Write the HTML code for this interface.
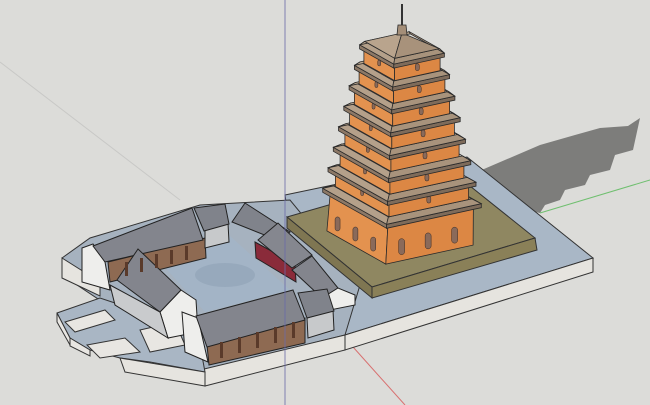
<!DOCTYPE html>
<html><head><meta charset="utf-8"><style>
html,body{margin:0;padding:0;background:#dcdcd8;width:650px;height:405px;overflow:hidden}
svg{display:block}
</style></head><body>
<svg id="s" width="650" height="405" viewBox="0 0 650 405" xmlns="http://www.w3.org/2000/svg">
<rect width="650" height="405" fill="#dcdcd9"/>
<line x1="0" y1="62" x2="180" y2="200" stroke="#c8c8c6" stroke-width="1"/>
<polygon points="470,175,540,145,575,135,600,128,628,126,640,118,633,150,615,155,610,170,590,175,585,185,565,190,560,200,545,205,540,213,505,205" fill="#7d7d7b"/>
<line x1="540" y1="213" x2="650" y2="180" stroke="#6fbf6f" stroke-width="1"/>
<line x1="345" y1="338" x2="405" y2="405" stroke="#d87070" stroke-width="1"/>
<polygon points="285,195,467,157,593,258,345,335,300,300" fill="#a9b7c6" stroke="#333" stroke-width="1"/>
<polygon points="345,335,593,258,593,272,345,350" fill="#e6e4df" stroke="#333" stroke-width="1"/>
<polygon points="62,258,90,238,200,205,290,200,360,285,345,335,205,370,62,275" fill="#a6b2bf" stroke="#333" stroke-width="1"/>
<polygon points="200,370,345,335,345,350,205,386" fill="#e6e4df" stroke="#333" stroke-width="1"/>
<polygon points="62,258,62,278,100,296,100,282" fill="#e6e4df" stroke="#333" stroke-width="1"/>
<polygon points="57,313,100,298,160,318,200,345,205,372,150,362,120,358,90,350,70,338" fill="#a9b6c4" stroke="#333" stroke-width="1"/>
<polygon points="57,313,70,338,70,345,57,322" fill="#e8e6e2" stroke="#333" stroke-width="1"/>
<polygon points="70,338,90,350,90,356,70,346" fill="#e8e6e2" stroke="#333" stroke-width="1"/>
<polygon points="87,345,125,338,140,352,100,358" fill="#e8e6e2" stroke="#333" stroke-width="1"/>
<polygon points="65,322,105,310,115,320,75,332" fill="#e8e6e2" stroke="#333" stroke-width="1"/>
<polygon points="120,358,205,372,205,386,125,372" fill="#e6e4df" stroke="#333" stroke-width="1"/>
<polygon points="140,330,175,322,185,345,150,352" fill="#e8e6e2" stroke="#333" stroke-width="1"/>
<polygon points="160,262,230,236,290,290,205,312" fill="#a3b4c6"/>
<ellipse cx="225" cy="275" rx="30" ry="12" fill="#8fa2b6" opacity=".6"/>
<polygon points="287,217,450,170,535,238,372,287" fill="#8f8761" stroke="#333" stroke-width="1"/>
<polygon points="287,217,372,287,372,298,287,228" fill="#7f7652" stroke="#333" stroke-width="1"/>
<polygon points="372,287,535,238,537,250,372,298" fill="#8a8058" stroke="#333" stroke-width="1"/>
<g id="pag"></g>
<g stroke="#222" stroke-width="1">
<polygon points="82,248,93,244,105,262,110,290,82,282" fill="#eeeeec"/>
<polygon points="108,262,205,238,206,258,110,282" fill="#8e6a52"/>
<polygon points="93,246,192,208,203,240,105,262" fill="#83858d"/>
<polygon points="205,230,228,223,229,242,205,248" fill="#c7c9cb"/>
<polygon points="194,208,225,204,229,224,204,231" fill="#80838b"/>
<polygon points="255,242,295,264,296,282,256,258" fill="#8a2b3a"/>
<polygon points="232,222,245,203,290,232,277,240" fill="#80838b"/>
<polygon points="258,240,278,223,312,255,292,268" fill="#85878f"/>
<polygon points="292,270,312,256,338,288,322,298" fill="#83858d"/>
<polygon points="322,298,338,288,355,295,355,305,330,310" fill="#eeeeec"/>
<polygon points="160,312,181,290,196,300,198,332,168,338" fill="#eeeeec"/>
<polygon points="110,285,160,312,168,338,115,305" fill="#c9cbcd"/>
<polygon points="117,280,138,249,181,290,160,312" fill="#83858d"/>
<polygon points="182,312,198,318,208,362,185,352" fill="#eeeeec"/>
<polygon points="207,345,305,318,305,343,209,365" fill="#8e6a52"/>
<polygon points="196,316,293,290,305,320,207,347" fill="#83858d"/>
<polygon points="307,318,333,310,334,330,308,338" fill="#c7c9cb"/>
<polygon points="298,293,327,289,334,311,307,318" fill="#80838b"/>
</g>
<g fill="#5a3a2a">
<rect x="125" y="262" width="3" height="14"/><rect x="140" y="258" width="3" height="14"/><rect x="155" y="254" width="3" height="14"/><rect x="170" y="250" width="3" height="14"/><rect x="185" y="246" width="3" height="14"/>
<rect x="220" y="342" width="3" height="16"/><rect x="238" y="337" width="3" height="16"/><rect x="256" y="332" width="3" height="16"/><rect x="274" y="327" width="3" height="16"/><rect x="292" y="322" width="3" height="16"/>
</g>
<line x1="285" y1="0" x2="285" y2="405" stroke="#6a6aa8" stroke-width="1" opacity=".8"/>
</svg>
<script>
(function(){
var g=document.getElementById('pag'),ns='http://www.w3.org/2000/svg';
var u=[92,-20],v=[-62,-35];
function P(c,s,a,b,h){return [c[0]+s*((a-.5)*u[0]+(b-.5)*v[0]),c[1]+s*((a-.5)*u[1]+(b-.5)*v[1])-(h||0)];}
function poly(pts,fill){var p=document.createElementNS(ns,'polygon');p.setAttribute('points',pts.map(function(q){return q[0].toFixed(1)+','+q[1].toFixed(1)}).join(' '));p.setAttribute('fill',fill);p.setAttribute('stroke','#2a2a2a');p.setAttribute('stroke-width','0.8');g.appendChild(p);}
function arch(x,y,w,h){var r=document.createElementNS(ns,'rect');r.setAttribute('x',x);r.setAttribute('y',y);r.setAttribute('width',w);r.setAttribute('height',h);r.setAttribute('rx',w/2);r.setAttribute('fill','#8a6a5a');r.setAttribute('stroke','#3a2a22');r.setAttribute('stroke-width','0.5');g.appendChild(r);}
var N=8,base=[400,238];
var cen=[],sc=[];
for(var k=0;k<N;k++){cen.push([402,196-k*21]);sc.push(1.03-0.48*k/7);}
for(var k=0;k<N;k++){
  var bot=k==0?base:[cen[k-1][0],cen[k-1][1]-3];
  var top=cen[k];
  var bs=(k==0?0.95:sc[k]*0.9);
  var bs2=sc[k]*0.9;
  var fb=P(bot,bs,0,0),lb=P(bot,bs,0,1),rb=P(bot,bs,1,0);
  var ft=P(top,bs2,0,0),lt=P(top,bs2,0,1),rt=P(top,bs2,1,0);
  poly([fb,lb,lt,ft],'#e3924f');
  poly([fb,rb,rt,ft],'#dc8744');
  if(k==0){
    for(var i=0;i<3;i++){var t=(i+0.7)/3.3;arch(fb[0]+t*(lb[0]-fb[0])-2.5,fb[1]+t*(lb[1]-fb[1])-20,5,14);}
    for(var i=0;i<3;i++){var t=(i+0.6)/3.3;arch(fb[0]+t*(rb[0]-fb[0])-3,fb[1]+t*(rb[1]-fb[1])-22,6,16);}
  } else {
    var t=.5;arch(ft[0]+t*(rt[0]-ft[0])-2,(fb[1]+ft[1])/2+t*(rt[1]-ft[1])-3,4,7);
    arch(ft[0]+t*(lt[0]-ft[0])-1.5,(fb[1]+ft[1])/2+t*(lt[1]-ft[1])-3,3,6);
  }
  var s=sc[k],th=4;
  var F=P(top,s,0,0),L=P(top,s,0,1),R=P(top,s,1,0),B=P(top,s,1,1);
  var Fi=P(top,s*0.88,0,0,4),Li=P(top,s*0.88,0,1,4),Ri=P(top,s*0.88,1,0,4),Bi=P(top,s*0.88,1,1,4);
  poly([[F[0],F[1]+th],[L[0],L[1]+th],L,F],'#8c7866');
  poly([[F[0],F[1]+th],[R[0],R[1]+th],R,F],'#7e6b5a');
  poly([F,L,Li,Fi],'#b4a08a');
  poly([F,R,Ri,Fi],'#a8937c');
  poly([L,B,Bi,Li],'#bca890');
  poly([R,B,Bi,Ri],'#b09a84');
}
var c=cen[N-1],s=sc[N-1]*0.88;
var F=P(c,s,0,0,4),L=P(c,s,0,1,4),R=P(c,s,1,0,4),A=[c[0],c[1]-16];
poly([F,L,A],'#b9a48d');poly([F,R,A],'#a8927b');
poly([[A[0]-5,A[1]+2],[A[0]+5,A[1]+2],[A[0]+4,A[1]-8],[A[0]-4,A[1]-8]],'#a48e78');
var l=document.createElementNS(ns,'line');l.setAttribute('x1',A[0]);l.setAttribute('y1',A[1]-8);l.setAttribute('x2',A[0]);l.setAttribute('y2',4);l.setAttribute('stroke','#333');l.setAttribute('stroke-width','2');g.appendChild(l);
})();
</script>
</body></html>
